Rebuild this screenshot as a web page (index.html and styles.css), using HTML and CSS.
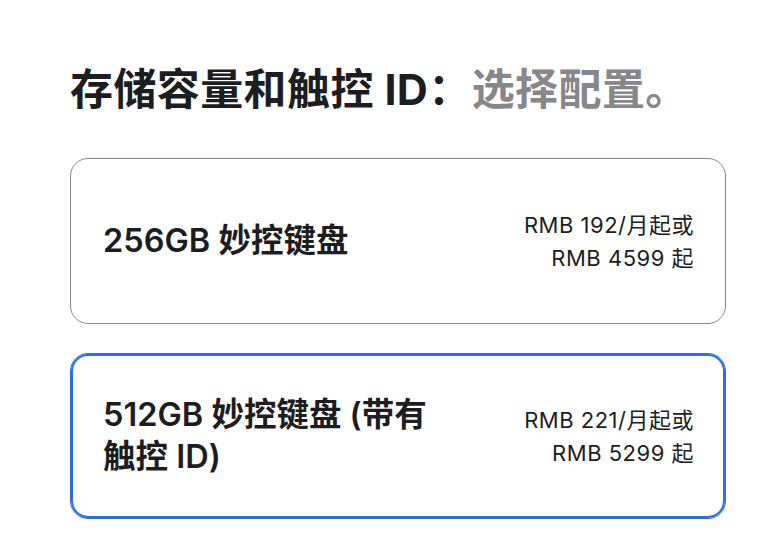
FILE: index.html
```html
<!DOCTYPE html>
<html lang="zh-CN">
<head>
<meta charset="utf-8">
<link rel="stylesheet" href="styles.css">
</head>
<body>
<main class="section">
  <h2 class="heading">存储容量和触控 ID：<span class="muted">选择配置。</span></h2>
  <div class="options">
    <div class="option">
      <div class="title">256GB 妙控键盘</div>
      <div class="price">RMB 192/月起或<br>RMB 4599 起</div>
    </div>
    <div class="option selected">
      <div class="title">512GB 妙控键盘 (带有触控 ID)</div>
      <div class="price">RMB 221/月起或<br>RMB 5299 起</div>
    </div>
  </div>
</main>
</body>
</html>
```

FILE: styles.css
```css
html, body {
  margin: 0;
  padding: 0;
  background: #ffffff;
}
body {
  font-family: Inter, "Noto Sans CJK SC", "Noto Sans", sans-serif;
  color: #1d1d1f;
}
.section {
  padding: 64px 40px 0 70px;
}
.heading {
  margin: 0;
  font-size: 43px;
  line-height: 50px;
  font-weight: 700;
  color: #1d1d1f;
  letter-spacing: 0.4px;
  white-space: nowrap;
}
.muted {
  color: #86868b;
}
.options {
  margin-top: 44px;
  display: flex;
  flex-direction: column;
  gap: 29px;
  width: 656px;
}
.option {
  box-sizing: border-box;
  height: 166px;
  border: 1px solid #86868b;
  border-radius: 18px;
  padding: 0 31px 0 32px;
  display: flex;
  align-items: center;
  justify-content: space-between;
}
.option.selected {
  border-color: #2d6fdb;
  box-shadow: inset 0 0 0 2px #2d6fdb;
}
.title {
  width: 340px;
  font-size: 32.5px;
  line-height: 42px;
  font-weight: 600;
}
.price {
  text-align: right;
  font-size: 22px;
  line-height: 33px;
  font-weight: 400;
  letter-spacing: 0.5px;
  padding-top: 2px;
}
```
